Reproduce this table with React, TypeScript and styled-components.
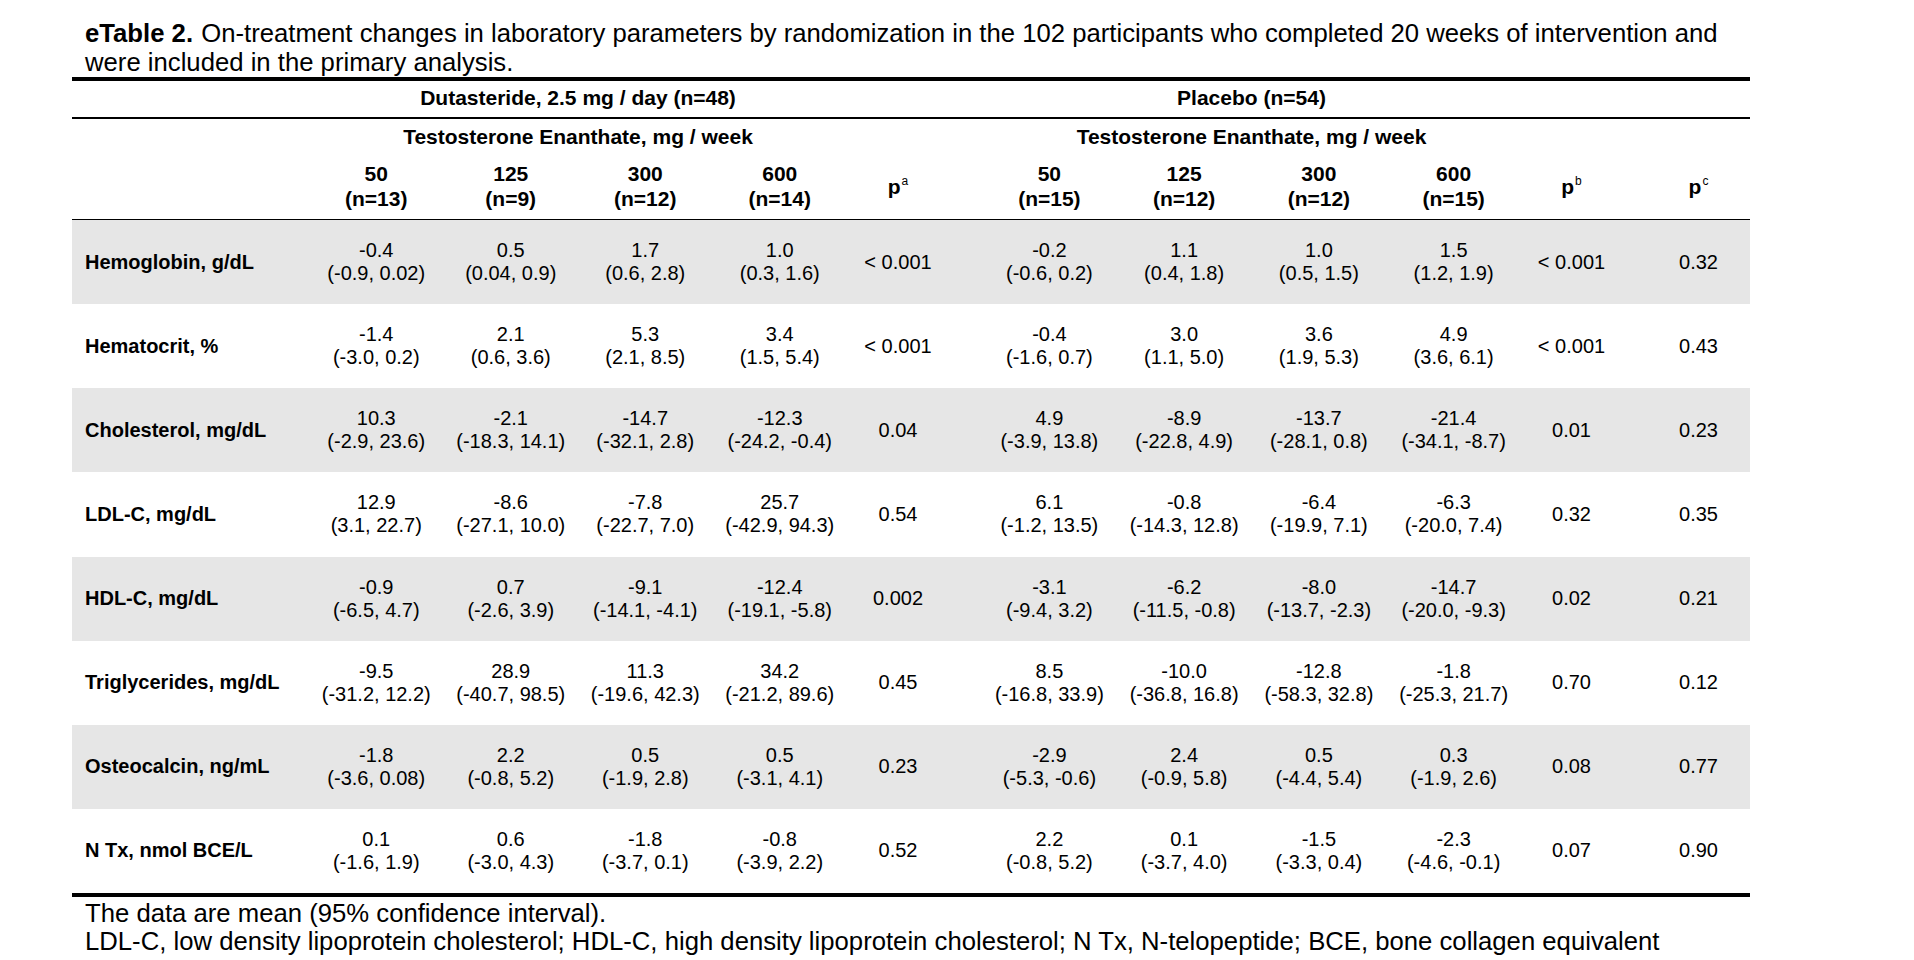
import React from 'react';
import styled, { createGlobalStyle } from 'styled-components';

const GlobalStyle = createGlobalStyle`
  html, body {
    margin: 0;
    padding: 0;
    background: #ffffff;
  }

  body {
    font-family: 'Liberation Sans', Arial, sans-serif;
    color: #000000;
  }
`;

const Page = styled.div`
  width: 1678px;
  padding: 19px 0 0 72px;
`;

const Caption = styled.p`
  margin: 0;
  padding-left: 13px;
  font-size: 25.7px;
  line-height: 29px;

  & > b {
    font-weight: 700;
    margin-right: 1px;
  }
`;

const Table = styled.table`
  width: 1678px;
  border-collapse: separate;
  border-spacing: 0;
  table-layout: fixed;
  border-top: 4px solid #000;
  border-bottom: 4px solid #000;
`;

const GroupRow = styled.tr`
  height: 38px;

  & > th {
    padding-bottom: 3px;
    border-bottom: 2px solid #000;
  }
`;

const SubGroupRow = styled.tr`
  height: 36px;

  & > th {
    padding-bottom: 2px;
  }
`;

const DoseRow = styled.tr`
  height: 65px;

  & > th {
    padding-bottom: 2px;
    border-bottom: 1px solid #000;
  }
`;

const HeadCell = styled.th`
  padding: 0;
  font-size: 21px;
  line-height: 25px;
  font-weight: 700;
  text-align: center;
  vertical-align: middle;
  white-space: nowrap;
`;

const Sup = styled.sup`
  font-size: 12px;
  font-weight: 400;
  vertical-align: 9px;
  line-height: 0;
  margin-left: 1px;
`;

const DataRow = styled.tr<{ $shaded: boolean }>`
  height: 84.125px;
  background: ${(p) => (p.$shaded ? '#e6e6e6' : '#ffffff')};
`;

const Label = styled.td`
  padding: 0 0 0 13px;
  font-size: 20px;
  font-weight: 700;
  text-align: left;
  vertical-align: middle;
  white-space: nowrap;
`;

const Cell = styled.td`
  padding: 0;
  font-size: 20px;
  line-height: 23px;
  text-align: center;
  vertical-align: middle;
  white-space: nowrap;
`;

const Notes = styled.div`
  padding: 2px 0 0 13px;
  font-size: 25.7px;
  line-height: 28px;
`;

type Est = [string, string];

type Row = {
  label: string;
  dut: Est[];
  pa: string;
  pla: Est[];
  pb: string;
  pc: string;
};

const rows: Row[] = [
  {
    label: 'Hemoglobin, g/dL',
    dut: [['-0.4', '(-0.9, 0.02)'], ['0.5', '(0.04, 0.9)'], ['1.7', '(0.6, 2.8)'], ['1.0', '(0.3, 1.6)']],
    pa: '< 0.001',
    pla: [['-0.2', '(-0.6, 0.2)'], ['1.1', '(0.4, 1.8)'], ['1.0', '(0.5, 1.5)'], ['1.5', '(1.2, 1.9)']],
    pb: '< 0.001',
    pc: '0.32',
  },
  {
    label: 'Hematocrit, %',
    dut: [['-1.4', '(-3.0, 0.2)'], ['2.1', '(0.6, 3.6)'], ['5.3', '(2.1, 8.5)'], ['3.4', '(1.5, 5.4)']],
    pa: '< 0.001',
    pla: [['-0.4', '(-1.6, 0.7)'], ['3.0', '(1.1, 5.0)'], ['3.6', '(1.9, 5.3)'], ['4.9', '(3.6, 6.1)']],
    pb: '< 0.001',
    pc: '0.43',
  },
  {
    label: 'Cholesterol, mg/dL',
    dut: [['10.3', '(-2.9, 23.6)'], ['-2.1', '(-18.3, 14.1)'], ['-14.7', '(-32.1, 2.8)'], ['-12.3', '(-24.2, -0.4)']],
    pa: '0.04',
    pla: [['4.9', '(-3.9, 13.8)'], ['-8.9', '(-22.8, 4.9)'], ['-13.7', '(-28.1, 0.8)'], ['-21.4', '(-34.1, -8.7)']],
    pb: '0.01',
    pc: '0.23',
  },
  {
    label: 'LDL-C, mg/dL',
    dut: [['12.9', '(3.1, 22.7)'], ['-8.6', '(-27.1, 10.0)'], ['-7.8', '(-22.7, 7.0)'], ['25.7', '(-42.9, 94.3)']],
    pa: '0.54',
    pla: [['6.1', '(-1.2, 13.5)'], ['-0.8', '(-14.3, 12.8)'], ['-6.4', '(-19.9, 7.1)'], ['-6.3', '(-20.0, 7.4)']],
    pb: '0.32',
    pc: '0.35',
  },
  {
    label: 'HDL-C, mg/dL',
    dut: [['-0.9', '(-6.5, 4.7)'], ['0.7', '(-2.6, 3.9)'], ['-9.1', '(-14.1, -4.1)'], ['-12.4', '(-19.1, -5.8)']],
    pa: '0.002',
    pla: [['-3.1', '(-9.4, 3.2)'], ['-6.2', '(-11.5, -0.8)'], ['-8.0', '(-13.7, -2.3)'], ['-14.7', '(-20.0, -9.3)']],
    pb: '0.02',
    pc: '0.21',
  },
  {
    label: 'Triglycerides, mg/dL',
    dut: [['-9.5', '(-31.2, 12.2)'], ['28.9', '(-40.7, 98.5)'], ['11.3', '(-19.6, 42.3)'], ['34.2', '(-21.2, 89.6)']],
    pa: '0.45',
    pla: [['8.5', '(-16.8, 33.9)'], ['-10.0', '(-36.8, 16.8)'], ['-12.8', '(-58.3, 32.8)'], ['-1.8', '(-25.3, 21.7)']],
    pb: '0.70',
    pc: '0.12',
  },
  {
    label: 'Osteocalcin, ng/mL',
    dut: [['-1.8', '(-3.6, 0.08)'], ['2.2', '(-0.8, 5.2)'], ['0.5', '(-1.9, 2.8)'], ['0.5', '(-3.1, 4.1)']],
    pa: '0.23',
    pla: [['-2.9', '(-5.3, -0.6)'], ['2.4', '(-0.9, 5.8)'], ['0.5', '(-4.4, 5.4)'], ['0.3', '(-1.9, 2.6)']],
    pb: '0.08',
    pc: '0.77',
  },
  {
    label: 'N Tx, nmol BCE/L',
    dut: [['0.1', '(-1.6, 1.9)'], ['0.6', '(-3.0, 4.3)'], ['-1.8', '(-3.7, 0.1)'], ['-0.8', '(-3.9, 2.2)']],
    pa: '0.52',
    pla: [['2.2', '(-0.8, 5.2)'], ['0.1', '(-3.7, 4.0)'], ['-1.5', '(-3.3, 0.4)'], ['-2.3', '(-4.6, -0.1)']],
    pb: '0.07',
    pc: '0.90',
  },
];

const doses: Est[] = [
  ['50', '(n=13)'],
  ['125', '(n=9)'],
  ['300', '(n=12)'],
  ['600', '(n=14)'],
];

const placeboDoses: Est[] = [
  ['50', '(n=15)'],
  ['125', '(n=12)'],
  ['300', '(n=12)'],
  ['600', '(n=15)'],
];

const widths = [237, 134.5, 134.5, 134.5, 134.5, 102, 33, 134.75, 134.75, 134.75, 134.75, 101, 25, 103];

const TwoLines = ({ top, bottom }: { top: string; bottom: string }) => (
  <>
    {top}
    <br />
    {bottom}
  </>
);

export default function App() {
  return (
    <>
      <GlobalStyle />
      <Page>
        <Caption>
          <b>eTable 2.</b> On-treatment changes in laboratory parameters by randomization in the 102
          participants who completed 20 weeks of intervention and were included in the primary analysis.
        </Caption>
        <Table>
          <colgroup>
            {widths.map((w, i) => (
              <col key={i} style={{ width: w }} />
            ))}
          </colgroup>
          <thead>
            <GroupRow>
              <HeadCell />
              <HeadCell colSpan={4}>Dutasteride, 2.5 mg / day (n=48)</HeadCell>
              <HeadCell colSpan={2} />
              <HeadCell colSpan={4}>Placebo (n=54)</HeadCell>
              <HeadCell colSpan={3} />
            </GroupRow>
            <SubGroupRow>
              <HeadCell />
              <HeadCell colSpan={4}>Testosterone Enanthate, mg / week</HeadCell>
              <HeadCell colSpan={2} />
              <HeadCell colSpan={4}>Testosterone Enanthate, mg / week</HeadCell>
              <HeadCell colSpan={3} />
            </SubGroupRow>
            <DoseRow>
              <HeadCell />
              {doses.map(([d, n]) => (
                <HeadCell key={'d' + n}>
                  <TwoLines top={d} bottom={n} />
                </HeadCell>
              ))}
              <HeadCell>
                p<Sup>a</Sup>
              </HeadCell>
              <HeadCell />
              {placeboDoses.map(([d, n]) => (
                <HeadCell key={'p' + d}>
                  <TwoLines top={d} bottom={n} />
                </HeadCell>
              ))}
              <HeadCell>
                p<Sup>b</Sup>
              </HeadCell>
              <HeadCell />
              <HeadCell>
                p<Sup>c</Sup>
              </HeadCell>
            </DoseRow>
          </thead>
          <tbody>
            {rows.map((r, i) => (
              <DataRow key={r.label} $shaded={i % 2 === 0}>
                <Label>{r.label}</Label>
                {r.dut.map(([m, ci], j) => (
                  <Cell key={'d' + j}>
                    <TwoLines top={m} bottom={ci} />
                  </Cell>
                ))}
                <Cell>{r.pa}</Cell>
                <Cell />
                {r.pla.map(([m, ci], j) => (
                  <Cell key={'p' + j}>
                    <TwoLines top={m} bottom={ci} />
                  </Cell>
                ))}
                <Cell>{r.pb}</Cell>
                <Cell />
                <Cell>{r.pc}</Cell>
              </DataRow>
            ))}
          </tbody>
        </Table>
        <Notes>
          The data are mean (95% confidence interval).
          <br />
          LDL-C, low density lipoprotein cholesterol; HDL-C, high density lipoprotein cholesterol; N Tx,
          N-telopeptide; BCE, bone collagen equivalent
        </Notes>
      </Page>
    </>
  );
}
